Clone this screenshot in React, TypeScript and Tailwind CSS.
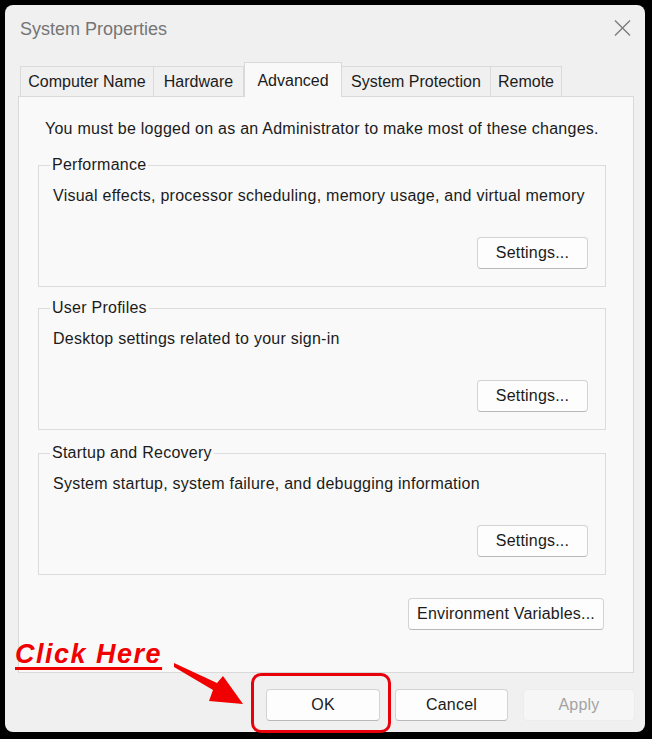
import React from "react";

const tabs = [
  { label: "Computer Name", w: "w-[134px]" },
  { label: "Hardware", w: "w-[91px]" },
  { label: "Advanced", w: "w-[98px]", active: true },
  { label: "System Protection", w: "w-[150px]" },
  { label: "Remote", w: "w-[72px]" },
];

const groups = [
  {
    title: "Performance",
    text: "Visual effects, processor scheduling, memory usage, and virtual memory",
    gap: "mt-[26px]",
  },
  {
    title: "User Profiles",
    text: "Desktop settings related to your sign-in",
    gap: "mt-[21px]",
  },
  {
    title: "Startup and Recovery",
    text: "System startup, system failure, and debugging information",
    gap: "mt-[23px]",
  },
];

function WinButton({ children, className = "", disabled = false }: { children: React.ReactNode; className?: string; disabled?: boolean }) {
  return (
    <button
      className={
        "h-[32px] rounded-[4px] border text-[16px] leading-none tracking-[0.2px] " +
        (disabled
          ? "bg-[#f6f6f6] border-[#ececec] text-[#a3a3a3] "
          : "bg-[#fdfdfd] border-[#d3d3d3] border-b-[#b8b8b8] text-[#1b1b1b] ") +
        className
      }
    >
      {children}
    </button>
  );
}

export default function App() {
  return (
    <div className="relative w-[652px] h-[739px] bg-black pt-[5px] pl-[5px] pr-[7px] pb-[7px] font-['Liberation_Sans',Arial,sans-serif]">
      <div className="h-full rounded-[8px] bg-[#f0f0f0] flex flex-col">
        {/* title bar */}
        <div className="h-[48px] flex items-center justify-between pl-[15px] pr-[14px]">
          <span className="text-[18px] text-[#757575]">System Properties</span>
          <svg width="17" height="16" viewBox="0 0 17 16" className="mb-[2px]">
            <path d="M1 0.5 L16 15.5 M16 0.5 L1 15.5" stroke="#7a7a7a" strokeWidth="1.3" fill="none" />
          </svg>
        </div>

        {/* tabs */}
        <div className="mt-[10px] h-[33px] flex items-end pl-[15px]">
          {tabs.map((t) =>
            t.active ? (
              <div
                key={t.label}
                className={`${t.w} h-[35px] -mb-px z-10 bg-[#f9f9f9] border border-b-0 border-[#d9d9d9] text-[16px] text-[#1b1b1b] flex items-start pt-[6px] justify-center`}
              >
                {t.label}
              </div>
            ) : (
              <div
                key={t.label}
                className={`${t.w} h-[30px] bg-[#f0f0f0] border border-b-0 border-[#dadada] -ml-px first:ml-0 text-[16px] text-[#1b1b1b] flex items-center justify-center`}
              >
                {t.label}
              </div>
            )
          )}
        </div>

        {/* panel */}
        <div className="ml-[13px] mr-[11px] h-[577px] bg-[#f9f9f9] border border-[#d9d9d9] flex flex-col pl-[19px] pr-[27px] tracking-[0.25px]">
          <p className="mt-[22px] ml-[7px] text-[16px] leading-[20px] text-[#1b1b1b]">
            You must be logged on as an Administrator to make most of these changes.
          </p>

          {groups.map((g) => (
            <div key={g.title} className={`${g.gap} h-[122px] border border-[#dcdcdc] flex flex-col`}>
              <span className="-mt-[11px] ml-[11px] px-[2px] self-start bg-[#f9f9f9] text-[16px] leading-[20px] text-[#1b1b1b]">
                {g.title}
              </span>
              <span className="mt-[11px] ml-[14px] text-[16px] leading-[20px] text-[#1b1b1b]">{g.text}</span>
              <WinButton className="mt-auto mb-[17px] mr-[17px] self-end w-[111px]">Settings...</WinButton>
            </div>
          ))}

          <WinButton className="mt-[23px] self-end mr-[2px] w-[196px]">Environment Variables...</WinButton>
        </div>

        {/* dialog buttons */}
        <div className="mt-[16px] flex justify-end gap-[15px] pr-[10px]">
          <WinButton className="w-[114px]">OK</WinButton>
          <WinButton className="w-[113px]">Cancel</WinButton>
          <WinButton disabled className="w-[112px]">Apply</WinButton>
        </div>
      </div>

      {/* annotation overlay */}
      <span className="absolute left-[15px] top-[638px] text-[27px] leading-[32px] font-bold italic tracking-[1.5px] text-[#f00000] underline decoration-[3px] underline-offset-[4px]">
        Click Here
      </span>
      <div className="absolute left-[251px] top-[673px] w-[140px] h-[60px] border-[3px] border-[#e8000b] rounded-[10px]" />
      <svg className="absolute left-0 top-0" width="652" height="739" viewBox="0 0 652 739">
        <polygon
          points="174,663 217,683 223,676 243,704 209,701 213,690 174,667"
          fill="#f00000"
        />
      </svg>
    </div>
  );
}
